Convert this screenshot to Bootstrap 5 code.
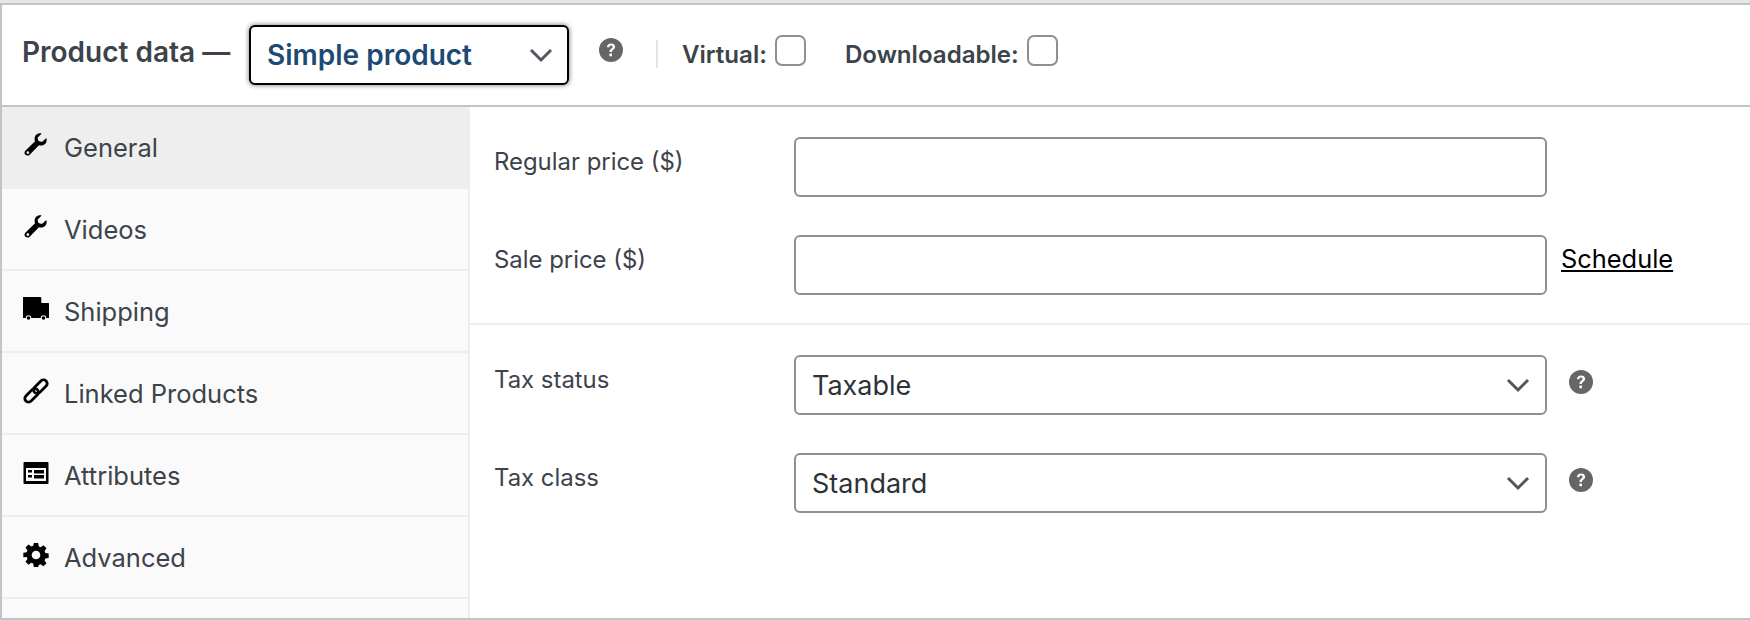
<!DOCTYPE html>
<html lang="en">
<head>
<meta charset="utf-8">
<title>Product data</title>
<link href="https://cdn.jsdelivr.net/npm/bootstrap@5.3.0/dist/css/bootstrap.min.css" rel="stylesheet">
<style>
html,body{height:620px;overflow:hidden;background:#fff}
body{font-family:Inter,"Liberation Sans",sans-serif;color:#3c434a}
.topstrip{height:3px;background:#e6e6e8}
.panel{height:617px;border:solid #c3c4c7;border-width:2px 0 2px 2px}
.pd-head{height:102px;border-bottom:2px solid #c3c4c7;padding-left:20px}
.pd-title{font-size:28px;font-weight:600;width:227px;white-space:nowrap;margin-top:-7px}
.form-select{--chev:url("data:image/svg+xml,%3csvg xmlns='http://www.w3.org/2000/svg' viewBox='0 0 24 24'%3e%3cpath fill='none' stroke='%2350575e' stroke-width='3' d='M2 7l10 10L22 7'/%3e%3c/svg%3e");background-image:var(--chev)}
.pd-type.form-select{width:320px;height:60px;font-size:28px;font-weight:600;color:#1d4a75;border:2px solid #000;border-radius:6px;box-shadow:0 0 4px 1px rgba(0,0,0,.4);padding:0 40px 0 16px;background-position:right 14px center;background-size:24px 24px}
.tip{width:24px;height:24px;flex:none}
.pd-sep{width:2px;height:28px;background:#e4e4e6}
.flag{font-size:24.1px;font-weight:600;white-space:nowrap}
.flag .form-check-input{width:31px;height:31px;margin:-8px 0 0 8px;border:2px solid #8c8f94;border-radius:7px;flex:none}
.pd-side{width:468px;flex:none;background:#fafafa;border-right:2px solid #eee}
.tab-item{height:82px;border-bottom:2px solid #eee;padding-left:21px;font-size:25.5px;white-space:nowrap}
.tab-item.is-on{background:#eee;margin-right:-2px}
.tab-ico{width:26px;height:26px;flex:none;margin-right:15px;margin-top:-5px;color:#000}
.tab-item span{margin-top:2px}
.pd-form{min-width:0}
.pd-group{padding:30px 0 28px}
.pd-group+.pd-group{border-top:2px solid #eee}
.pd-row{height:60px}
.pd-row+.pd-row{margin-top:38px}
.pd-label{width:324px;flex:none;padding-left:24px;font-size:23.9px;margin-top:-11px;white-space:nowrap}
.pd-field.form-control,.pd-field.form-select{width:753px;flex:none;height:60px;border:2px solid #8c8f94;border-radius:6px;font-size:27px;color:#2c3338;padding:2px 40px 0 16px;background-position:right 15px center;background-size:24px 24px}
.sched{color:#000;font-size:25.4px;margin-left:14px;margin-top:-11px}
.field-tip{margin-left:22px;margin-top:-7px}
</style>
</head>
<body>
<div class="topstrip"></div>
<div class="panel d-flex flex-column">
  <div class="pd-head d-flex align-items-center flex-shrink-0">
    <div class="pd-title">Product data —</div>
    <select class="form-select pd-type" aria-label="Product type"><option>Simple product</option></select>
    <svg class="tip" style="margin:-10px 0 0 30px" viewBox="0 0 24 24"><circle cx="12" cy="12" r="12" fill="#666"/><path d="M8 9.200c0-2.400 1.800-3.700 4.100-3.700s4 1.200 4 3.300c0 2.900-3.200 2.700-3.200 5.200h-2.400c0-3.500 3-3.400 3-5.100 0-.8-.6-1.300-1.500-1.300-1 0-1.600.6-1.600 1.600z" fill="#fff"/><rect x="10.400" y="15.500" width="2.600" height="2.800" rx=".5" fill="#fff"/></svg>
    <div class="pd-sep" style="margin:-2px 24px 0 33px"></div>
    <label class="flag d-flex align-items-center"><span>Virtual:</span><input class="form-check-input" type="checkbox"></label>
    <label class="flag d-flex align-items-center" style="margin-left:39px"><span>Downloadable:</span><input class="form-check-input" type="checkbox"></label>
  </div>
  <div class="d-flex flex-grow-1">
    <div class="pd-side">
      <div class="tab-item is-on d-flex align-items-center">
        <svg class="tab-ico" viewBox="0 0 24 24"><path d="M21.500 5.500l-4 3.800-3.300-.9-.8-3.200L17.300 1.300C14 .3 10.500 2.500 10.700 6.500c0 .8.200 1.500.4 2L2.400 17c-1.900 1.900-.6 3.500-.1 4 1 1 2.600 1.100 3.900-.1l8.500-8.600c4.300 1.300 8.400-2.200 6.800-6.800zM4.500 20.300a1.300 1.300 0 1 1 0-2.600 1.300 1.300 0 0 1 0 2.600z" fill="currentColor" fill-rule="evenodd"/></svg>
        <span>General</span>
      </div>
      <div class="tab-item d-flex align-items-center">
        <svg class="tab-ico" viewBox="0 0 24 24"><path d="M21.500 5.500l-4 3.800-3.300-.9-.8-3.200L17.300 1.300C14 .3 10.500 2.500 10.700 6.500c0 .8.200 1.500.4 2L2.400 17c-1.900 1.900-.6 3.500-.1 4 1 1 2.600 1.100 3.900-.1l8.500-8.600c4.300 1.300 8.400-2.200 6.800-6.800zM4.500 20.300a1.300 1.300 0 1 1 0-2.600 1.300 1.300 0 0 1 0 2.600z" fill="currentColor" fill-rule="evenodd"/></svg>
        <span>Videos</span>
      </div>
      <div class="tab-item d-flex align-items-center">
        <svg class="tab-ico" viewBox="0 0 26 26"><path d="M0 1h17.500l.8.800v5.200H25.500l.5.500V22h-2.700a2.800 2.800 0 0 0-5.600 0H8.300a2.800 2.800 0 0 0-5.600 0H0z" fill="currentColor"/><circle cx="5.500" cy="22" r="1.800" fill="currentColor"/><circle cx="20.500" cy="22" r="1.800" fill="currentColor"/></svg>
        <span>Shipping</span>
      </div>
      <div class="tab-item d-flex align-items-center">
        <svg class="tab-ico" viewBox="0 0 24 24" fill="none" stroke="currentColor" stroke-width="2.600"><g transform="rotate(-45 12 12)"><rect x="10.200" y="8.600" width="15" height="6.800" rx="3.400"/><rect x="-1.200" y="8.600" width="15" height="6.800" rx="3.400"/></g></svg>
        <span>Linked Products</span>
      </div>
      <div class="tab-item d-flex align-items-center">
        <svg class="tab-ico" viewBox="0 0 26 26"><path d="M1.500 2h23a1 1 0 0 1 1 1v20a1 1 0 0 1-1 1h-23a1 1 0 0 1-1-1V3a1 1 0 0 1 1-1zM3 8v13h20V8zM5 10h4v2.500H5zM5 15h4v2.500H5zM11 10h10v3.500H11zM11 15h10v3.500H11z" fill="currentColor" fill-rule="evenodd"/></svg>
        <span>Attributes</span>
      </div>
      <div class="tab-item d-flex align-items-center">
        <svg class="tab-ico" viewBox="0 0 24 24"><path d="M10 1h4l.6 3.100 1.700.7 2.600-1.800 2.800 2.800-1.800 2.600.7 1.700 3.100.6v4l-3.100.6-.7 1.700 1.800 2.600-2.800 2.800-2.600-1.800-1.700.7L14 23h-4l-.6-3.100-1.700-.7-2.600 1.800-2.800-2.800 1.800-2.600-.7-1.700L.3 14v-4l3.100-.6.700-1.700L2.300 5.100l2.800-2.800 2.600 1.800 1.700-.7zM12 8a4 4 0 1 0 0 8 4 4 0 0 0 0-8z" fill="currentColor" fill-rule="evenodd"/></svg>
        <span>Advanced</span>
      </div>
    </div>
    <div class="pd-form flex-grow-1">
      <div class="pd-group">
        <div class="pd-row d-flex align-items-center">
          <label class="pd-label">Regular price ($)</label>
          <input class="form-control pd-field" type="text">
        </div>
        <div class="pd-row d-flex align-items-center">
          <label class="pd-label">Sale price ($)</label>
          <input class="form-control pd-field" type="text">
          <a class="sched" href="#">Schedule</a>
        </div>
      </div>
      <div class="pd-group">
        <div class="pd-row d-flex align-items-center">
          <label class="pd-label">Tax status</label>
          <select class="form-select pd-field"><option>Taxable</option></select>
          <svg class="tip field-tip" viewBox="0 0 24 24"><circle cx="12" cy="12" r="12" fill="#666"/><path d="M8 9.200c0-2.400 1.800-3.700 4.100-3.700s4 1.200 4 3.300c0 2.900-3.200 2.700-3.200 5.200h-2.400c0-3.500 3-3.400 3-5.100 0-.8-.6-1.300-1.500-1.300-1 0-1.600.6-1.600 1.600z" fill="#fff"/><rect x="10.400" y="15.500" width="2.600" height="2.800" rx=".5" fill="#fff"/></svg>
        </div>
        <div class="pd-row d-flex align-items-center">
          <label class="pd-label">Tax class</label>
          <select class="form-select pd-field"><option>Standard</option></select>
          <svg class="tip field-tip" viewBox="0 0 24 24"><circle cx="12" cy="12" r="12" fill="#666"/><path d="M8 9.200c0-2.400 1.800-3.700 4.100-3.700s4 1.200 4 3.300c0 2.900-3.200 2.700-3.200 5.200h-2.400c0-3.500 3-3.400 3-5.100 0-.8-.6-1.300-1.500-1.300-1 0-1.600.6-1.600 1.600z" fill="#fff"/><rect x="10.400" y="15.500" width="2.600" height="2.800" rx=".5" fill="#fff"/></svg>
        </div>
      </div>
    </div>
  </div>
</div>
<script src="https://cdn.jsdelivr.net/npm/bootstrap@5.3.0/dist/js/bootstrap.bundle.min.js"></script>
</body>
</html>
